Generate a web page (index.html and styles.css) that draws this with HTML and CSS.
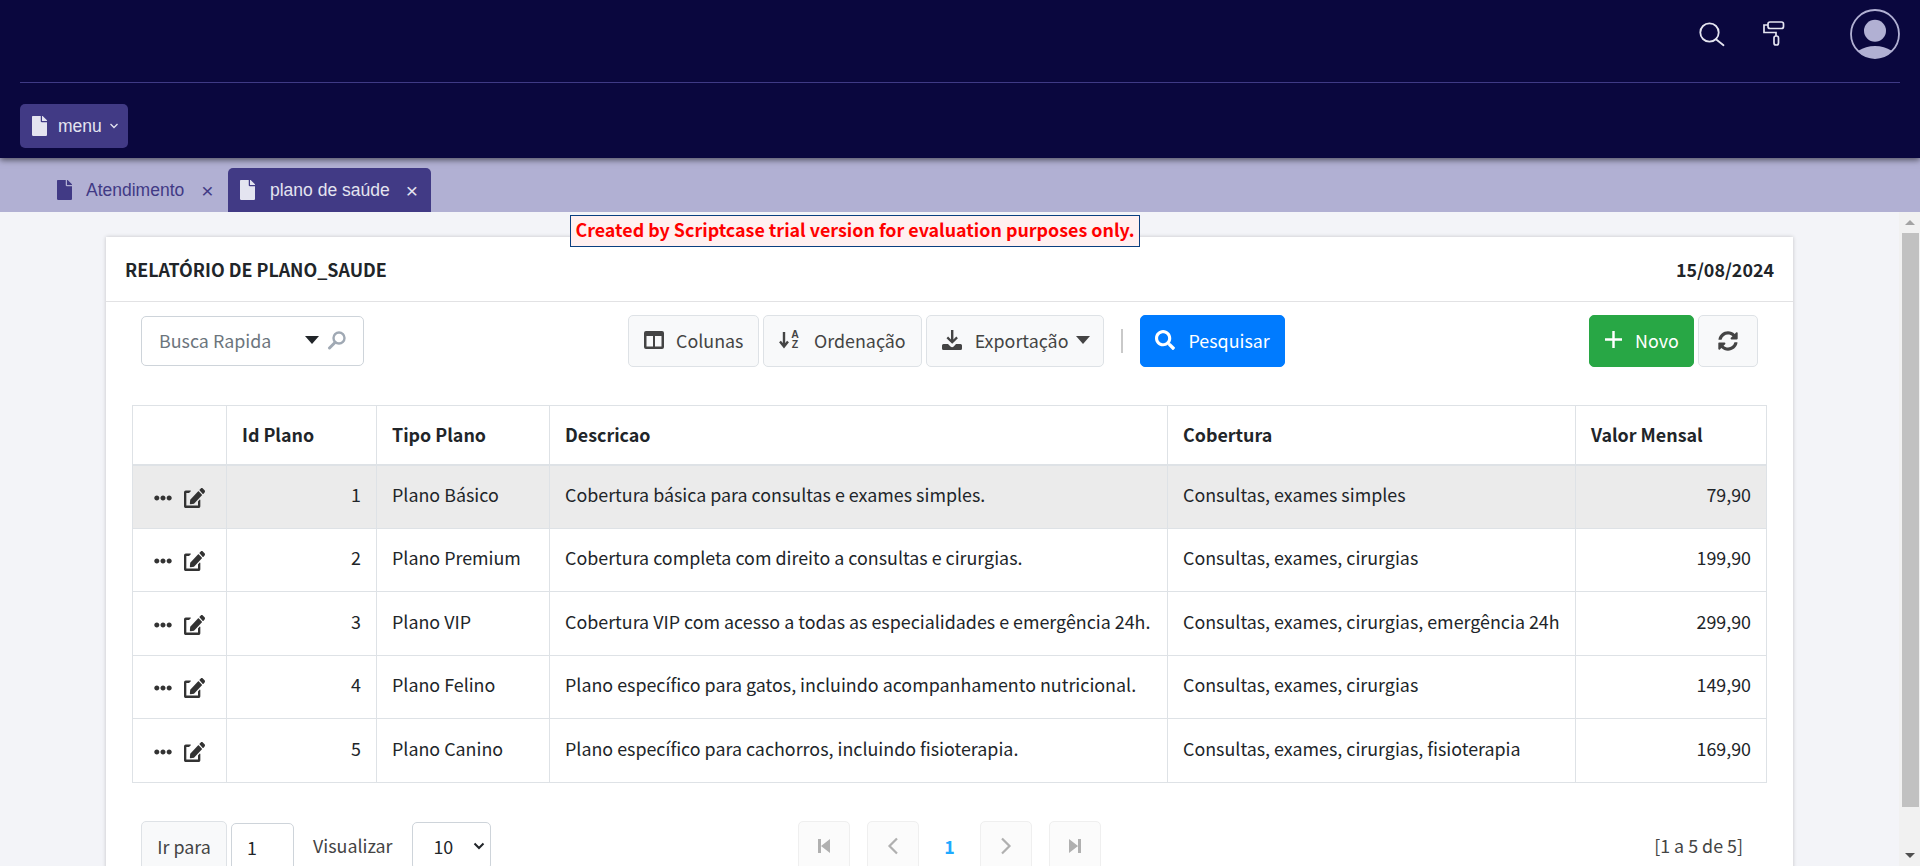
FILE: index.html
```html
<!DOCTYPE html>
<html lang="pt-BR">
<head>
<meta charset="utf-8">
<title>Relatório de plano_saude</title>
<link rel="stylesheet" href="styles.css">
</head>
<body>
<svg class="defs" aria-hidden="true">
  <symbol id="i-file" viewBox="0 0 384 512"><path d="M224 136V0H24C10.7 0 0 10.7 0 24v464c0 13.3 10.7 24 24 24h336c13.3 0 24-10.7 24-24V160H248c-13.2 0-24-10.8-24-24zm160-14.1v6.1H256V0h6.1c6.4 0 12.5 2.5 17 7l97.9 98c4.5 4.5 7 10.6 7 16.9z"/></symbol>
  <symbol id="i-edit" viewBox="0 0 576 512" preserveAspectRatio="none"><path d="M402.6 83.2l90.2 90.2c3.8 3.8 3.8 10 0 13.8L274.4 405.6l-92.8 10.3c-12.4 1.4-22.9-9.1-21.5-21.5l10.3-92.8L388.8 83.2c3.8-3.8 10-3.8 13.8 0zm162-22.9l-48.8-48.8c-15.2-15.2-39.9-15.2-55.2 0l-35.4 35.4c-3.8 3.8-3.8 10 0 13.8l90.2 90.2c3.8 3.8 10 3.8 13.8 0l35.4-35.4c15.2-15.3 15.2-40 0-55.2zM384 346.2V448H64V128h73.2c3.2 0 6.2-1.3 8.5-3.5l40-40c7.6-7.6 2.2-20.5-8.5-20.5H48C21.5 64 0 85.5 0 112v352c0 26.5 21.5 48 48 48h352c26.5 0 48-21.5 48-48V306.2c0-10.7-12.9-16-20.5-8.5l-40 40c-2.2 2.3-3.5 5.3-3.5 8.5z"/></symbol>
  <symbol id="i-dots" viewBox="0 0 512 512"><path d="M328 256c0 39.8-32.2 72-72 72s-72-32.2-72-72 32.2-72 72-72 72 32.2 72 72zm104-72c-39.8 0-72 32.2-72 72s32.2 72 72 72 72-32.2 72-72-32.2-72-72-72zm-352 0c-39.8 0-72 32.2-72 72s32.2 72 72 72 72-32.2 72-72-32.2-72-72-72z"/></symbol>
  <symbol id="i-search" viewBox="0 0 512 512"><path d="M505 442.7L405.3 343c-4.5-4.5-10.6-7-17-7H372c27.6-35.3 44-79.7 44-128C416 93.1 322.9 0 208 0S0 93.1 0 208s93.1 208 208 208c48.3 0 92.7-16.4 128-44v16.3c0 6.4 2.5 12.5 7 17l99.7 99.7c9.4 9.4 24.6 9.4 33.9 0l28.3-28.3c9.4-9.4 9.4-24.6.1-34zM208 336c-70.7 0-128-57.2-128-128 0-70.7 57.2-128 128-128 70.7 0 128 57.2 128 128 0 70.7-57.2 128-128 128z"/></symbol>
  <symbol id="i-sync" viewBox="0 0 512 512"><path d="M370.72 133.28C339.458 104.008 298.888 87.962 255.848 88c-77.458.068-144.328 53.178-162.791 126.85-1.344 5.363-6.122 9.15-11.651 9.15H24.103c-7.498 0-13.194-6.807-11.807-14.176C33.933 94.924 134.813 8 256 8c66.448 0 126.791 26.136 171.315 68.685L463.03 40.97C478.149 25.851 504 36.559 504 57.941V192c0 13.255-10.745 24-24 24H345.941c-21.382 0-32.09-25.851-16.971-40.971l41.75-41.749zM32 296h134.059c21.382 0 32.09 25.851 16.971 40.971l-41.75 41.75c31.262 29.273 71.835 45.319 114.876 45.28 77.418-.07 144.315-53.144 162.787-126.849 1.344-5.363 6.122-9.15 11.651-9.15h57.304c7.498 0 13.194 6.807 11.807 14.176C478.067 417.076 377.187 504 256 504c-66.448 0-126.791-26.136-171.315-68.685L48.97 471.03C33.851 486.149 8 475.441 8 454.059V320c0-13.255 10.745-24 24-24z"/></symbol>
</svg>

<header class="topbar">
  <div class="topbar-row">
    <svg class="top-icon search-top" viewBox="0 0 26 26" fill="none" stroke="currentColor" stroke-width="1.800"><circle cx="10.500" cy="10.500" r="9.200"/><path d="M17 17.200l7.500 6" stroke-linecap="round"/></svg>
    <svg class="top-icon roller" viewBox="0 0 22 26" fill="none" stroke="currentColor" stroke-width="1.700"><rect x="5" y="1" width="15.500" height="6.500" rx="2"/><path d="M5 4H1v7.500h12V15"/><rect x="11" y="15" width="4.500" height="9" rx="2"/></svg>
    <svg class="avatar" viewBox="0 0 50 50" fill="none"><defs><clipPath id="av"><circle cx="25" cy="25" r="24"/></clipPath></defs><circle cx="25" cy="25" r="24" stroke="#b1b0d3" stroke-width="1.800"/><circle cx="25" cy="21.700" r="11" fill="#b1b0d3"/><g clip-path="url(#av)"><ellipse cx="25" cy="52" rx="23" ry="15" fill="#b1b0d3"/></g></svg>
  </div>
  <nav class="menubar">
    <a class="menu-btn"><svg class="file-ic"><use href="#i-file"/></svg><span>menu</span><svg class="chev" viewBox="0 0 10 6" fill="none" stroke="currentColor" stroke-width="1.300"><path d="M1.500 1l3.500 3.500L8.500 1"/></svg></a>
  </nav>
</header>

<div class="tabs">
  <div class="tab"><svg class="file-ic"><use href="#i-file"/></svg><span class="tab-label">Atendimento</span><span class="tab-x">×</span></div>
  <div class="tab tab-active"><svg class="file-ic"><use href="#i-file"/></svg><span class="tab-label">plano de saúde</span><span class="tab-x">×</span></div>
</div>

<div class="workspace">
  <main class="content">
    <div class="trial"><span class="trial-msg">Created by Scriptcase trial version for evaluation purposes only.</span></div>
    <section class="card">
      <div class="card-head"><span>RELATÓRIO DE PLANO_SAUDE</span><span>15/08/2024</span></div>
      <div class="toolbar">
        <div class="quick">
          <span class="quick-text">Busca Rapida</span>
          <span class="caret"></span>
          <svg class="quick-ic" viewBox="0 0 20 20" fill="none"><circle cx="12" cy="8" r="5.500" stroke="#a0a9b4" stroke-width="2.400"/><path d="M8 12.500L2.500 18" stroke="#a0a9b4" stroke-width="3" stroke-linecap="round"/></svg>
        </div>
        <div class="tool-group">
          <button class="btn btn-col"><svg class="btn-ic col-ic" viewBox="0 0 20 18"><path fill-rule="evenodd" d="M2 0h16a2 2 0 0 1 2 2v14a2 2 0 0 1-2 2H2a2 2 0 0 1-2-2V2a2 2 0 0 1 2-2zm.500 5v10.500h6.500V5zm8.500 0v10.500h6.500V5z"/></svg>Colunas</button>
          <button class="btn"><span class="sort-ic"><svg class="sort-arrow" viewBox="0 0 10 18" fill="none" stroke="currentColor" stroke-width="2.400"><path d="M5 1v14.500M1 10.500l4 5 4-5"/></svg><span class="sort-letters"><span>A</span><span>Z</span></span></span>Ordenação</button>
          <button class="btn"><svg class="btn-ic" viewBox="0 0 20 20"><path d="M9 0h2.400v9.500l2.900-2.900 1.600 1.600-5.700 5.600-5.700-5.600 1.600-1.600 2.900 2.900z"/><path d="M1.500 14H6l2.500 2.500a2.300 2.300 0 0 0 3.200 0L14 14h4.500a1.500 1.500 0 0 1 1.500 1.500v3a1.500 1.500 0 0 1-1.500 1.500h-17A1.500 1.500 0 0 1 0 18.500v-3A1.500 1.500 0 0 1 1.500 14z"/></svg>Exportação<span class="caret caret-btn"></span></button>
          <span class="tool-sep"></span>
          <button class="btn btn-primary"><svg class="btn-ic"><use href="#i-search"/></svg>Pesquisar</button>
        </div>
        <div class="tool-right">
          <button class="btn btn-success"><svg class="btn-ic plus-ic" viewBox="0 0 18 18"><path d="M7.700 0h2.600v7.700H18v2.600h-7.700V18H7.700v-7.700H0V7.700h7.700z"/></svg>Novo</button>
          <button class="btn btn-icon"><svg class="btn-ic"><use href="#i-sync"/></svg></button>
        </div>
      </div>
      <div class="table-wrap">
        <table class="grid">
          <colgroup><col class="c-act"><col class="c-id"><col class="c-tipo"><col class="c-desc"><col class="c-cob"><col class="c-val"></colgroup>
          <thead><tr><th></th><th>Id Plano</th><th>Tipo Plano</th><th>Descricao</th><th>Cobertura</th><th>Valor Mensal</th></tr></thead>
          <tbody>
            <tr class="hl"><td class="act"><svg class="dots"><use href="#i-dots"/></svg><svg class="edit"><use href="#i-edit"/></svg></td><td class="num">1</td><td>Plano Básico</td><td>Cobertura básica para consultas e exames simples.</td><td>Consultas, exames simples</td><td class="num">79,90</td></tr>
            <tr><td class="act"><svg class="dots"><use href="#i-dots"/></svg><svg class="edit"><use href="#i-edit"/></svg></td><td class="num">2</td><td>Plano Premium</td><td>Cobertura completa com direito a consultas e cirurgias.</td><td>Consultas, exames, cirurgias</td><td class="num">199,90</td></tr>
            <tr><td class="act"><svg class="dots"><use href="#i-dots"/></svg><svg class="edit"><use href="#i-edit"/></svg></td><td class="num">3</td><td>Plano VIP</td><td>Cobertura VIP com acesso a todas as especialidades e emergência 24h.</td><td>Consultas, exames, cirurgias, emergência 24h</td><td class="num">299,90</td></tr>
            <tr><td class="act"><svg class="dots"><use href="#i-dots"/></svg><svg class="edit"><use href="#i-edit"/></svg></td><td class="num">4</td><td>Plano Felino</td><td>Plano específico para gatos, incluindo acompanhamento nutricional.</td><td>Consultas, exames, cirurgias</td><td class="num">149,90</td></tr>
            <tr><td class="act"><svg class="dots"><use href="#i-dots"/></svg><svg class="edit"><use href="#i-edit"/></svg></td><td class="num">5</td><td>Plano Canino</td><td>Plano específico para cachorros, incluindo fisioterapia.</td><td>Consultas, exames, cirurgias, fisioterapia</td><td class="num">169,90</td></tr>
          </tbody>
        </table>
      </div>
      <div class="pager">
        <div class="pager-left">
          <span class="goto-label">Ir para</span>
          <span class="goto-input">1</span>
          <span class="view-label">Visualizar</span>
          <span class="view-select">10<svg class="sel-chev" viewBox="0 0 12 8" fill="none" stroke="currentColor" stroke-width="2"><path d="M1.500 1.500L6 6l4.500-4.500"/></svg></span>
        </div>
        <div class="pager-nav">
          <span class="nav-btn"><svg class="nav-end" viewBox="0 0 14 14"><path d="M1 0h3v14H1zM13 0v14L4 7z"/></svg></span>
          <span class="nav-btn"><svg viewBox="0 0 14 18" fill="none" stroke="currentColor" stroke-width="2.200"><path d="M11 1.500L3.500 9l7.500 7.500"/></svg></span>
          <span class="nav-cur">1</span>
          <span class="nav-btn"><svg viewBox="0 0 14 18" fill="none" stroke="currentColor" stroke-width="2.200"><path d="M3 1.500L10.500 9 3 16.500"/></svg></span>
          <span class="nav-btn"><svg class="nav-end" viewBox="0 0 14 14"><path d="M1 0v14l9-7zM10 0h3v14h-3z"/></svg></span>
        </div>
        <span class="pager-count">[1 a 5 de 5]</span>
      </div>
    </section>
  </main>
  <div class="scrollbar"><span class="sb-up"></span><span class="sb-thumb"></span><span class="sb-down"></span></div>
</div>
</body>
</html>
```

FILE: styles.css
```css
* { box-sizing: border-box; }
html, body { height: 100%; margin: 0; }
body { display: flex; flex-direction: column; overflow: hidden; background: #f3f4f8; font-family: "Noto Sans CJK SC", "Noto Sans", sans-serif; font-size: 17.880px; color: #212529; }
.defs { display: none; }
svg:not([fill]) { fill: currentColor; }

.topbar { height: 158px; flex: none; background: #0a073e; color: #e4e4f0; box-shadow: 0 2px 6px rgba(0, 0, 0, .55); position: relative; z-index: 2; }
.topbar-row { height: 83px; margin: 0 20px; border-bottom: 1px solid #3f3a85; display: flex; align-items: flex-start; justify-content: flex-end; }
.top-icon { flex: none; }
.search-top { width: 26px; height: 26px; margin-top: 22px; }
.roller { width: 22px; height: 26px; margin: 21px 0 0 38px; }
.avatar { width: 50px; height: 50px; margin: 9px 0 0 65px; }
.menubar { padding: 21px 20px 0; }
.menu-btn { width: 108px; height: 44px; background: #413a85; border-radius: 5px; display: flex; align-items: center; padding-left: 12px; font-family: "Liberation Sans", Arial, sans-serif; font-size: 17.500px; color: #e4e4f0; }
.file-ic { width: 15px; height: 20px; flex: none; }
.menu-btn .file-ic { margin-right: 11px; }
.chev { width: 10px; height: 6px; margin-left: 7px; }

.tabs { height: 54px; flex: none; background: #b1b0d3; display: flex; align-items: flex-end; padding-left: 57px; font-family: "Liberation Sans", Arial, sans-serif; font-size: 17.500px; color: #413a85; }
.tab { height: 44px; display: flex; align-items: center; width: 171px; }
.tab .file-ic { margin-right: 14px; }
.tab-label { flex: none; }
.tab-x { margin-left: 17px; font-size: 21px; line-height: 1; }
.tab-active { width: 203px; background: #413a85; color: #e4e4f0; border-radius: 5px 5px 0 0; padding-left: 12px; }
.tab-active .file-ic { margin-right: 15px; }
.tab-active .tab-x { margin-left: 16px; }

.workspace { flex: 1; min-height: 0; display: flex; }
.content { flex: 1; min-width: 0; overflow: hidden; padding: 25px 106px 0; position: relative; }
.trial { position: absolute; top: 3px; left: 570px; z-index: 1; }
.trial-msg { display: block; border: 1px solid #0a3f80; background: #fff0f0; color: #f00; font-weight: 700; line-height: 26px; height: 32px; width: 570px; text-align: center; white-space: nowrap; }

.card { background: #fff; box-shadow: 0 0 4px rgba(0, 0, 0, .2); padding-bottom: 40px; }
.card-head { height: 65px; border-bottom: 1px solid #e2e2e4; display: flex; align-items: center; justify-content: space-between; padding: 0 19px; font-weight: 700; }

.toolbar { display: flex; align-items: center; padding: 12px 35px 0; height: 65px; }
.quick { width: 223px; height: 50px; border: 1px solid #ced4da; border-radius: 5px; display: flex; align-items: center; padding-left: 17px; color: #6c757d; line-height: 44px; padding-bottom: 2px; }
.quick-text { flex: none; width: 146px; }
.caret { width: 0; height: 0; border-left: 7px solid transparent; border-right: 7px solid transparent; border-top: 8px solid #212529; flex: none; }
.quick-ic { width: 20px; height: 20px; margin-left: 8px; }
.tool-group { display: flex; align-items: center; gap: 4px; margin-left: 264px; }
.btn { height: 52px; border: 1px solid #dee2e6; border-radius: 5px; background: #f8f9fa; color: #444; font: inherit; display: flex; align-items: center; padding: 0 15px 2px; white-space: nowrap; }
.btn-ic { width: 20px; height: 20px; margin-right: 13px; flex: none; }
.sort-ic { display: flex; align-items: center; flex: none; margin-right: 14px; }
.sort-arrow { width: 10px; height: 18px; flex: none; }
.sort-letters { display: flex; flex-direction: column; align-items: center; width: 10px; margin-left: 1px; font-family: "Liberation Sans", Arial, sans-serif; font-weight: 700; font-size: 10.500px; line-height: 9.500px; }
.btn-col { width: 131px; }
.col-ic { height: 18px; margin-right: 12px; }
.caret-btn { border-top-color: #444; margin: 0 -2px 0 8px; }
.tool-sep { width: 2px; height: 24px; background: #c9c9c9; margin: 0 13px; }
.btn-primary { background: #007bff; border-color: #007bff; color: #fff; padding: 0 14px 2px; }
.tool-right { display: flex; align-items: center; gap: 4px; margin-left: auto; }
.btn-success { background: #28a745; border-color: #28a745; color: #fff; width: 105px; }
.plus-ic { width: 17px; height: 17px; margin-right: 13px; }
.btn-icon { width: 60px; justify-content: center; padding: 0; }
.btn-icon .btn-ic { margin: 0; }

.table-wrap { padding: 38px 26px 0; }
.grid { width: 1634px; border-collapse: collapse; table-layout: fixed; }
.grid th, .grid td { border: 1px solid #dee2e6; padding: 0 15px; white-space: nowrap; overflow: hidden; }
.grid th { height: 59px; text-align: left; font-weight: 700; border-bottom-width: 2px; padding-bottom: 2px; }
.grid td { height: 63.500px; padding-bottom: 5px; }
.hl td { background: #ebebeb; }
.num { text-align: right; }
.c-act { width: 94px; } .c-id { width: 150px; } .c-tipo { width: 173px; } .c-desc { width: 618px; } .c-cob { width: 408px; } .c-val { width: 191px; }
.grid td.act { padding: 0 0 3px 21px; }
.act svg { vertical-align: middle; color: #333; }
.dots { width: 18px; height: 18px; margin-right: 12px; }
.edit { width: 21px; height: 20px; }

.pager { display: flex; align-items: flex-start; padding: 38px 35px 0; }
.pager-left { display: flex; align-items: flex-start; width: 657px; }
.goto-label { width: 86px; height: 50px; background: #f8f9fa; border: 1px solid #dee2e6; border-radius: 5px; display: flex; align-items: center; justify-content: center; color: #444; }
.goto-input { width: 63px; height: 48px; margin: 2px 0 0 4px; border: 1px solid #ced4da; border-radius: 5px; padding-left: 15px; display: flex; align-items: center; }
.view-label { margin: 11px 20px 0 19px; color: #444; }
.view-select { width: 79px; height: 48px; margin-top: 1px; border: 1px solid #ced4da; border-radius: 5px; display: flex; align-items: center; padding-left: 20px; }
.sel-chev { width: 12px; height: 8px; margin-left: 20px; }
.pager-nav { display: flex; align-items: center; gap: 17px; }
.nav-btn { width: 52px; height: 50px; background: #fbfbfb; border: 1px solid #efefef; border-radius: 5px; display: flex; align-items: center; justify-content: center; color: #b0b0b0; }
.nav-btn svg { width: 14px; height: 18px; }
.nav-btn .nav-end { height: 14px; }
.nav-cur { width: 27px; text-align: center; font-weight: 700; color: #1eaaff; }
.pager-count { margin-left: auto; margin-top: 11px; color: #444; padding-right: 15px; }

.scrollbar { width: 21px; flex: none; background: #f1f1f1; display: flex; flex-direction: column; align-items: center; padding-left: 1px; }
.sb-up { flex: none; width: 0; height: 0; border-left: 5px solid transparent; border-right: 5px solid transparent; border-bottom: 5px solid #a3a3a3; margin-top: 8px; }
.sb-thumb { width: 17px; height: 574px; background: #c1c1c1; margin-top: 8px; flex: none; }
.sb-down { flex: none; width: 0; height: 0; border-left: 5px solid transparent; border-right: 5px solid transparent; border-top: 5px solid #505050; margin-top: auto; margin-bottom: 8px; }
```
